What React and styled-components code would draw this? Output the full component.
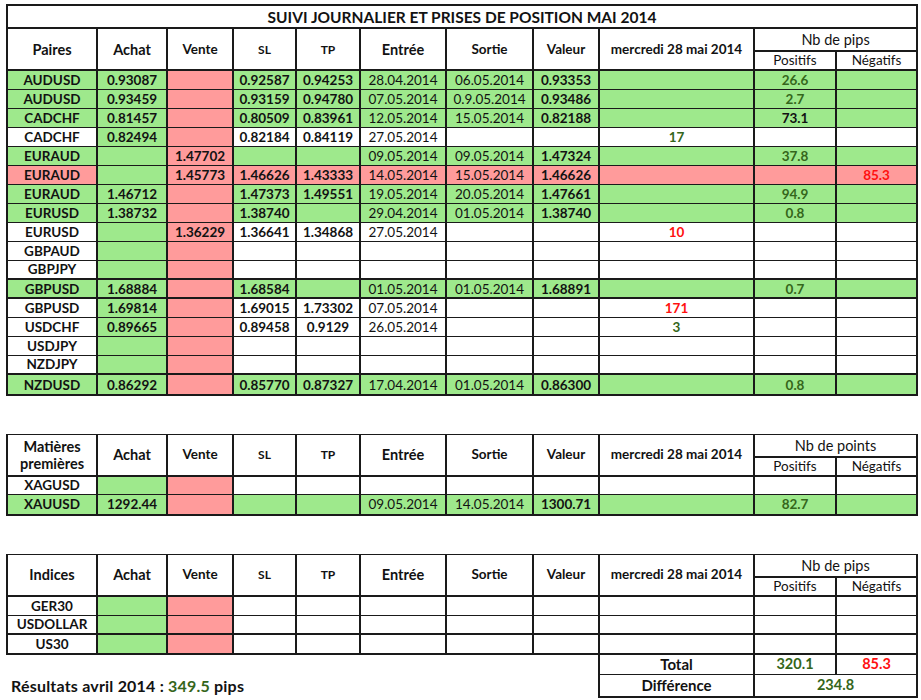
import React from "react";
import styled, { createGlobalStyle } from "styled-components";

const GlobalStyle = createGlobalStyle`
  html, body { margin: 0; padding: 0; background: #fff; }
  body { font-family: Lato, "Open Sans", "Liberation Sans", sans-serif; color: #111; }
`;

const FILLS = { g: "#9ee98c", r: "#ff9b9b" };
const GREEN = "#35661b";
const RED = "#ff1010";
const WIDTHS = [90, 70, 66, 63, 64, 86, 87, 66, 155, 82, 81];

const Page = styled.div`
  padding: 4px 0 0 6px;
  display: flex;
  flex-direction: column;
  gap: 38px;
`;

const Sheet = styled.table`
  border-collapse: collapse;
  table-layout: fixed;
  width: 910px;
`;

const Row = styled.tr`
  height: ${(p) => p.$h || 19}px;
`;

const Cell = styled.td`
  border: 1px solid #1a1a1a;
  border-left-width: 2px;
  border-right-width: 2px;
  border-top-width: ${(p) => (p.$thickTop ? 2 : 1)}px;
  border-bottom-width: ${(p) => (p.$thickBottom ? 2 : 1)}px;
  padding: 0 2px;
  text-align: center;
  vertical-align: middle;
  white-space: nowrap;
  font-size: ${(p) => p.$size || 13.5}px;
  line-height: 16px;
  font-weight: ${(p) => (p.$bold ? 700 : 400)};
  color: ${(p) => p.$color || "#121212"};
  background: ${(p) => FILLS[p.$fill] || "#fff"};
`;

const HeadCell = styled(Cell)`
  font-size: ${(p) => p.$size || 14.5}px;
  line-height: 17px;
  white-space: normal;
`;

const Title = styled(Cell)`
  font-size: 15.5px;
  font-weight: 700;
  border-width: 2px;
`;

const Blank = styled.td`
  border: none;
  padding: 0 0 0 4px;
  text-align: left;
  vertical-align: middle;
`;

const Result = styled.span`
  font-size: 16px;
  font-weight: 700;
  color: #121212;
  letter-spacing: 0.2px;
`;

const ResultValue = styled.span`
  color: ${GREEN};
`;

function Cols() {
  return (
    <colgroup>
      {WIDTHS.map((w, i) => (
        <col key={i} style={{ width: w }} />
      ))}
    </colgroup>
  );
}

function Header({ first, groupLabel, top = 22 }) {
  return (
    <>
      <Row $h={top}>
        <HeadCell rowSpan={2} $bold $thickBottom>{first}</HeadCell>
        <HeadCell rowSpan={2} $bold $thickBottom>Achat</HeadCell>
        <HeadCell rowSpan={2} $bold $size={13.5} $thickBottom>Vente</HeadCell>
        <HeadCell rowSpan={2} $bold $size={12} $thickBottom>SL</HeadCell>
        <HeadCell rowSpan={2} $bold $size={12} $thickBottom>TP</HeadCell>
        <HeadCell rowSpan={2} $bold $thickBottom>Entrée</HeadCell>
        <HeadCell rowSpan={2} $bold $size={13.5} $thickBottom>Sortie</HeadCell>
        <HeadCell rowSpan={2} $bold $size={13.5} $thickBottom>Valeur</HeadCell>
        <HeadCell rowSpan={2} $bold $size={13.5} $thickBottom>mercredi 28 mai 2014</HeadCell>
        <HeadCell colSpan={2} $thickBottom>{groupLabel}</HeadCell>
      </Row>
      <Row $h={18}>
        <HeadCell $size={13.5} $thickBottom>Positifs</HeadCell>
        <HeadCell $size={13.5} $thickBottom>Négatifs</HeadCell>
      </Row>
    </>
  );
}

const BOLD_COLS = [true, true, true, true, true, false, false, true, true, true, true];

function fillFor(type, col) {
  if (col === 2) return "r";
  if (type === "G") return "g";
  if (type === "R") return col === 1 ? "g" : "r";
  return col === 1 ? "g" : undefined;
}

function colorFor(row, col) {
  if (row.colors && row.colors[col]) return row.colors[col];
  if (col === 9) return GREEN;
  if (col === 10) return RED;
  return undefined;
}

function DataRow({ row }) {
  return (
    <Row $h={row.h}>
      {row.cells.map((v, i) => (
        <Cell
          key={i}
          $fill={fillFor(row.type, i)}
          $bold={BOLD_COLS[i]}
          $color={colorFor(row, i)}
          $thickTop={row.thick}
          $thickBottom={row.thickBottom}
        >
          {v}
        </Cell>
      ))}
    </Row>
  );
}

const E = ["", "", "", "", "", "", "", "", ""];
const pairs = [
  { type: "G", cells: ["AUDUSD", "0.93087", "", "0.92587", "0.94253", "28.04.2014", "06.05.2014", "0.93353", "", "26.6", ""] },
  { type: "G", cells: ["AUDUSD", "0.93459", "", "0.93159", "0.94780", "07.05.2014", "0.9.05.2014", "0.93486", "", "2.7", ""] },
  { type: "G", cells: ["CADCHF", "0.81457", "", "0.80509", "0.83961", "12.05.2014", "15.05.2014", "0.82188", "", "73.1", ""], colors: { 9: "#121212" } },
  { type: "W", cells: ["CADCHF", "0.82494", "", "0.82184", "0.84119", "27.05.2014", "", "", "17", "", ""], colors: { 8: GREEN } },
  { type: "G", cells: ["EURAUD", "", "1.47702", "", "", "09.05.2014", "09.05.2014", "1.47324", "", "37.8", ""] },
  { type: "R", cells: ["EURAUD", "", "1.45773", "1.46626", "1.43333", "14.05.2014", "15.05.2014", "1.46626", "", "", "85.3"] },
  { type: "G", cells: ["EURAUD", "1.46712", "", "1.47373", "1.49551", "19.05.2014", "20.05.2014", "1.47661", "", "94.9", ""] },
  { type: "G", cells: ["EURUSD", "1.38732", "", "1.38740", "", "29.04.2014", "01.05.2014", "1.38740", "", "0.8", ""] },
  { type: "W", cells: ["EURUSD", "", "1.36229", "1.36641", "1.34868", "27.05.2014", "", "", "10", "", ""], colors: { 8: RED } },
  { type: "W", cells: ["GBPAUD", ...E, ""] },
  { type: "W", cells: ["GBPJPY", ...E, ""] },
  { type: "G", thick: true, cells: ["GBPUSD", "1.68884", "", "1.68584", "", "01.05.2014", "01.05.2014", "1.68891", "", "0.7", ""] },
  { type: "W", thick: true, cells: ["GBPUSD", "1.69814", "", "1.69015", "1.73302", "07.05.2014", "", "", "171", "", ""], colors: { 8: RED } },
  { type: "W", cells: ["USDCHF", "0.89665", "", "0.89458", "0.9129", "26.05.2014", "", "", "3", "", ""], colors: { 8: GREEN } },
  { type: "W", cells: ["USDJPY", ...E, ""] },
  { type: "W", cells: ["NZDJPY", ...E, ""] },
  { type: "G", thick: true, thickBottom: true, h: 21, cells: ["NZDUSD", "0.86292", "", "0.85770", "0.87327", "17.04.2014", "01.05.2014", "0.86300", "", "0.8", ""] },
];

const commodities = [
  { type: "W", cells: ["XAGUSD", ...E, ""] },
  { type: "G", thickBottom: true, h: 20, cells: ["XAUUSD", "1292.44", "", "", "", "09.05.2014", "14.05.2014", "1300.71", "", "82.7", ""] },
];

const indices = [
  { type: "W", cells: ["GER30", ...E, ""] },
  { type: "W", cells: ["USDOLLAR", ...E, ""] },
  { type: "W", thick: true, thickBottom: true, h: 20, cells: ["US30", ...E, ""] },
];

export default function App() {
  return (
    <>
      <GlobalStyle />
      <Page>
        <Sheet>
          <Cols />
          <tbody>
            <Row $h={23}>
              <Title colSpan={11}>SUIVI JOURNALIER ET PRISES DE POSITION MAI 2014</Title>
            </Row>
            <Header first="Paires" groupLabel="Nb de pips" top={23} />
            {pairs.map((r, i) => (
              <DataRow key={i} row={r} />
            ))}
          </tbody>
        </Sheet>

        <Sheet>
          <Cols />
          <tbody>
            <Header first="Matières premières" groupLabel="Nb de points" />
            {commodities.map((r, i) => (
              <DataRow key={i} row={r} />
            ))}
          </tbody>
        </Sheet>

        <Sheet>
          <Cols />
          <tbody>
            <Header first="Indices" groupLabel="Nb de pips" top={23} />
            {indices.map((r, i) => (
              <DataRow key={i} row={r} />
            ))}
            <Row $h={20}>
              <Blank colSpan={8} />
              <Cell $bold $size={15}>Total</Cell>
              <Cell $bold $size={14.5} $color={GREEN}>320.1</Cell>
              <Cell $bold $size={14.5} $color={RED}>85.3</Cell>
            </Row>
            <Row $h={23}>
              <Blank colSpan={8}>
                <Result>
                  Résultats avril 2014 : <ResultValue>349.5</ResultValue> pips
                </Result>
              </Blank>
              <Cell $bold $size={15} $thickBottom>Différence</Cell>
              <Cell $bold $size={14.5} $color={GREEN} colSpan={2} $thickBottom>234.8</Cell>
            </Row>
          </tbody>
        </Sheet>
      </Page>
    </>
  );
}
